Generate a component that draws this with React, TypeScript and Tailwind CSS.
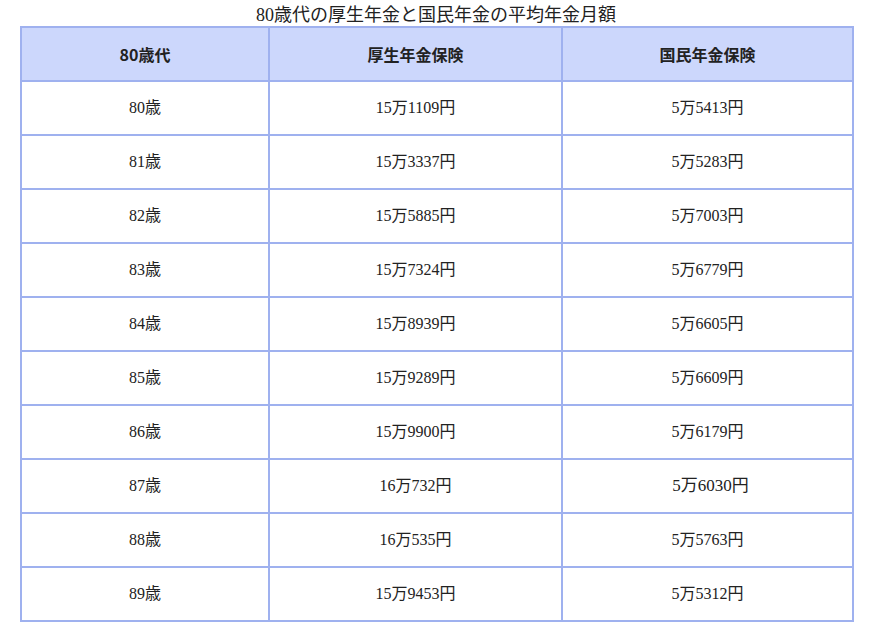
const rows = [
  ["80歳", "15万1109円", "5万5413円"],
  ["81歳", "15万3337円", "5万5283円"],
  ["82歳", "15万5885円", "5万7003円"],
  ["83歳", "15万7324円", "5万6779円"],
  ["84歳", "15万8939円", "5万6605円"],
  ["85歳", "15万9289円", "5万6609円"],
  ["86歳", "15万9900円", "5万6179円"],
  ["87歳", "16万732円", "5万6030円"],
  ["88歳", "16万535円", "5万5763円"],
  ["89歳", "15万9453円", "5万5312円"],
];

const serif = "font-['Liberation_Serif','Noto_Sans_CJK_JP',serif]";

export default function App() {
  return (
    <div className="bg-white w-[870px] h-[638px] pt-[5px] pl-[20px] text-[#222]">
      <div className={`w-[832px] text-center text-[18px] leading-[21px] ${serif}`}>
        80歳代の厚生年金と国民年金の平均年金月額
      </div>
      <table className="w-[832px] border-collapse border-2 border-[#9fb1ef] table-fixed">
        <colgroup>
          <col className="w-[248px]" />
          <col className="w-[293px]" />
          <col className="w-[291px]" />
        </colgroup>
        <thead>
          <tr className="h-[54px] bg-[#ccd7fc]">
            {["80歳代", "厚生年金保険", "国民年金保険"].map((h) => (
              <th
                key={h}
                className="border-2 border-[#9fb1ef] text-[16px] font-bold font-['Noto_Sans_CJK_JP',sans-serif]"
              >
                {h}
              </th>
            ))}
          </tr>
        </thead>
        <tbody>
          {rows.map((r) => (
            <tr key={r[0]} className="h-[54px]">
              {r.map((c, i) => (
                <td
                  key={i}
                  className={`border-2 border-[#9fb1ef] text-center ${serif} ${
                    c === "5万6030円" ? "text-[17px] pl-[6px]" : "text-[16px]"
                  }`}
                >
                  {c}
                </td>
              ))}
            </tr>
          ))}
        </tbody>
      </table>
    </div>
  );
}
